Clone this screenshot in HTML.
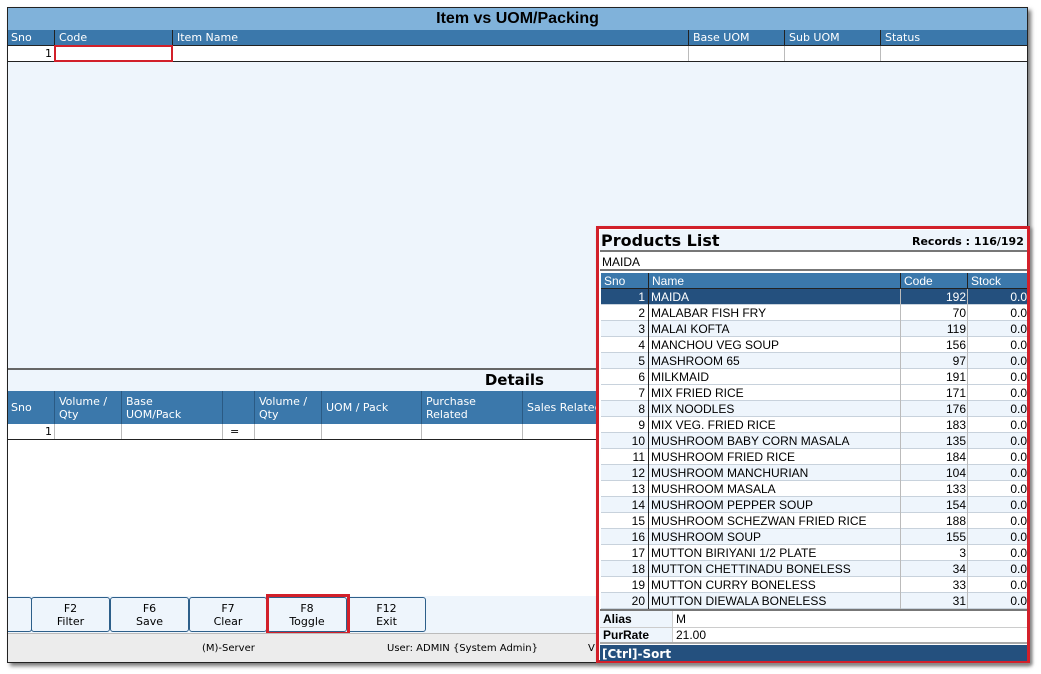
<!DOCTYPE html><html><head><style>
*{box-sizing:border-box;margin:0;padding:0}
body{width:1041px;height:674px;background:#fff;font-family:"DejaVu Sans",Verdana,sans-serif;font-size:11px;position:relative;overflow:hidden}
.a{position:absolute}
.win{left:7px;top:7px;width:1021px;height:656px;border:1px solid #222;background:#eef5fc;box-shadow:3px 3px 4px #777}
.hd{background:#3b78ab;color:#fff}
.c{position:absolute;top:0;bottom:0;border-left:1px solid #222;padding-left:4px;white-space:nowrap}
.lc{position:absolute;top:0;bottom:0;border-left:1px solid #bbb}
.btn{position:absolute;top:597px;height:35px;border:1px solid #2d5f8a;border-radius:3px;background:#eef5fc;text-align:center;font-size:11px;line-height:13px;padding-top:4px}
.pl{font-family:"Liberation Sans",Arial,sans-serif;font-size:12px}
.r{position:absolute;left:0;width:426px;height:16px;border-bottom:1px solid #c8d2dc}
.r span{position:absolute;top:1px}
</style></head><body>
<div class="a win"></div>
<div class="a" style="left:8px;top:8px;width:1019px;height:22px;background:#80b2da;text-align:center;font:bold 16px 'Liberation Sans',Arial,sans-serif;line-height:22px;color:#000">Item vs UOM/Packing</div>
<div class="a hd" style="left:8px;top:30px;width:1019px;height:15px;line-height:15px">
<span style="position:absolute;left:3px">Sno</span>
<div class="c" style="left:46px">Code</div><div class="c" style="left:164px">Item Name</div><div class="c" style="left:680px">Base UOM</div><div class="c" style="left:776px">Sub UOM</div><div class="c" style="left:872px">Status</div></div>
<div class="a" style="left:8px;top:45px;width:1019px;height:17px;background:#fff;border-top:1px solid #222;border-bottom:1px solid #222">
<span style="position:absolute;left:37px;top:1px">1</span>
<div class="lc" style="left:680px"></div><div class="lc" style="left:776px"></div><div class="lc" style="left:872px"></div></div>
<div class="a" style="left:54px;top:45px;width:119px;height:17px;border:2px solid #d2202a"></div>
<div class="a" style="left:8px;top:368px;width:1019px;height:2px;background:#666"></div>
<div class="a" style="left:8px;top:370px;width:590px;height:21px;font:bold 15px 'DejaVu Sans',sans-serif;line-height:21px;text-align:right;padding-right:54px">Details</div>
<div class="a hd" style="left:8px;top:391px;width:590px;height:33px;line-height:13px;overflow:hidden">
<span style="position:absolute;left:3px;top:10px">Sno</span>
<div class="c" style="left:46px;padding-top:4px;border-color:#2a5a84">Volume /<br>Qty</div>
<div class="c" style="left:113px;padding-top:4px;border-color:#2a5a84">Base<br>UOM/Pack</div>
<div class="c" style="left:214px;border-color:#2a5a84"></div>
<div class="c" style="left:246px;padding-top:4px;border-color:#2a5a84">Volume /<br>Qty</div>
<div class="c" style="left:313px;padding-top:10px;border-color:#2a5a84">UOM / Pack</div>
<div class="c" style="left:413px;padding-top:4px;border-color:#2a5a84">Purchase<br>Related</div>
<div class="c" style="left:514px;padding-top:10px;border-color:#2a5a84">Sales Related</div></div>
<div class="a" style="left:8px;top:424px;width:590px;height:16px;background:#fff;border-bottom:1px solid #222">
<span style="position:absolute;left:37px;top:1px">1</span><span style="position:absolute;left:222px;top:1px">=</span>
<div class="lc" style="left:46px"></div><div class="lc" style="left:113px"></div><div class="lc" style="left:214px"></div><div class="lc" style="left:246px"></div><div class="lc" style="left:313px"></div><div class="lc" style="left:413px"></div><div class="lc" style="left:514px"></div></div>
<div class="a" style="left:8px;top:440px;width:590px;height:156px;background:#fff"></div>
<div class="btn" style="left:8px;width:24px;border-left:none;border-radius:0 3px 3px 0"></div>
<div class="btn" style="left:31px;width:79px">F2<br>Filter</div>
<div class="btn" style="left:110px;width:79px">F6<br>Save</div>
<div class="btn" style="left:189px;width:78px">F7<br>Clear</div>
<div class="btn" style="left:267px;width:80px">F8<br>Toggle</div>
<div class="btn" style="left:347px;width:79px">F12<br>Exit</div>
<div class="a" style="left:266px;top:594px;width:84px;height:41px;border:3px solid #d2202a"></div>
<div class="a" style="left:8px;top:633px;width:590px;height:29px;background:#ececec;border-top:1px solid #bbb;font-size:10px;line-height:29px">
<span style="position:absolute;left:194px">(M)-Server</span><span style="position:absolute;left:379px">User: ADMIN {System Admin}</span><span style="position:absolute;left:580px">V</span></div>
<div class="a" style="left:596px;top:226px;width:434px;height:437px;border:3px solid #d2202a;background:#fff;box-shadow:2px 2px 3px #888"></div>
<div class="a" style="left:600px;top:230px;width:427px;height:22px;background:#eef5fc;border-bottom:2px solid #777;overflow:hidden">
<span style="position:absolute;left:1px;top:1px;font:bold 16px 'DejaVu Sans',sans-serif">Products List</span>
<span style="position:absolute;left:312px;top:5px;font:bold 11px 'DejaVu Sans',sans-serif;white-space:nowrap">Records : 116/192</span></div>
<div class="a pl" style="left:600px;top:254px;width:427px;height:17px;border-bottom:2px solid #777;line-height:16px;padding-left:2px">MAIDA</div>
<div class="a pl" style="left:601px;top:273px;width:426px;height:16px;background:#3b78ab;color:#fff;line-height:16px;border-bottom:1px solid #222">
<span style="position:absolute;left:3px">Sno</span><div class="c" style="left:47px;padding-left:3px">Name</div><div class="c" style="left:299px;padding-left:3px">Code</div><div class="c" style="left:366px;padding-left:3px">Stock</div></div>
<div class="a pl" style="left:601px;top:289px;width:426px;height:320px;overflow:hidden">
<div class="r" style="top:0;background:#24507e;color:#fff"><span style="right:382px">1</span><span style="left:50px">MAIDA</span><span style="right:61px">192</span><span style="right:0">0.0</span></div>
<div class="r" style="top:16px;background:#fff"><span style="right:382px">2</span><span style="left:50px">MALABAR FISH FRY</span><span style="right:61px">70</span><span style="right:0">0.0</span></div>
<div class="r" style="top:32px;background:#eef5fc"><span style="right:382px">3</span><span style="left:50px">MALAI KOFTA</span><span style="right:61px">119</span><span style="right:0">0.0</span></div>
<div class="r" style="top:48px;background:#fff"><span style="right:382px">4</span><span style="left:50px">MANCHOU VEG SOUP</span><span style="right:61px">156</span><span style="right:0">0.0</span></div>
<div class="r" style="top:64px;background:#eef5fc"><span style="right:382px">5</span><span style="left:50px">MASHROOM 65</span><span style="right:61px">97</span><span style="right:0">0.0</span></div>
<div class="r" style="top:80px;background:#fff"><span style="right:382px">6</span><span style="left:50px">MILKMAID</span><span style="right:61px">191</span><span style="right:0">0.0</span></div>
<div class="r" style="top:96px;background:#fff"><span style="right:382px">7</span><span style="left:50px">MIX FRIED RICE</span><span style="right:61px">171</span><span style="right:0">0.0</span></div>
<div class="r" style="top:112px;background:#eef5fc"><span style="right:382px">8</span><span style="left:50px">MIX NOODLES</span><span style="right:61px">176</span><span style="right:0">0.0</span></div>
<div class="r" style="top:128px;background:#fff"><span style="right:382px">9</span><span style="left:50px">MIX VEG. FRIED RICE</span><span style="right:61px">183</span><span style="right:0">0.0</span></div>
<div class="r" style="top:144px;background:#eef5fc"><span style="right:382px">10</span><span style="left:50px">MUSHROOM BABY CORN MASALA</span><span style="right:61px">135</span><span style="right:0">0.0</span></div>
<div class="r" style="top:160px;background:#fff"><span style="right:382px">11</span><span style="left:50px">MUSHROOM FRIED RICE</span><span style="right:61px">184</span><span style="right:0">0.0</span></div>
<div class="r" style="top:176px;background:#eef5fc"><span style="right:382px">12</span><span style="left:50px">MUSHROOM MANCHURIAN</span><span style="right:61px">104</span><span style="right:0">0.0</span></div>
<div class="r" style="top:192px;background:#fff"><span style="right:382px">13</span><span style="left:50px">MUSHROOM MASALA</span><span style="right:61px">133</span><span style="right:0">0.0</span></div>
<div class="r" style="top:208px;background:#eef5fc"><span style="right:382px">14</span><span style="left:50px">MUSHROOM PEPPER SOUP</span><span style="right:61px">154</span><span style="right:0">0.0</span></div>
<div class="r" style="top:224px;background:#fff"><span style="right:382px">15</span><span style="left:50px">MUSHROOM SCHEZWAN FRIED RICE</span><span style="right:61px">188</span><span style="right:0">0.0</span></div>
<div class="r" style="top:240px;background:#eef5fc"><span style="right:382px">16</span><span style="left:50px">MUSHROOM SOUP</span><span style="right:61px">155</span><span style="right:0">0.0</span></div>
<div class="r" style="top:256px;background:#fff"><span style="right:382px">17</span><span style="left:50px">MUTTON BIRIYANI 1/2 PLATE</span><span style="right:61px">3</span><span style="right:0">0.0</span></div>
<div class="r" style="top:272px;background:#eef5fc"><span style="right:382px">18</span><span style="left:50px">MUTTON CHETTINADU BONELESS</span><span style="right:61px">34</span><span style="right:0">0.0</span></div>
<div class="r" style="top:288px;background:#fff"><span style="right:382px">19</span><span style="left:50px">MUTTON CURRY BONELESS</span><span style="right:61px">33</span><span style="right:0">0.0</span></div>
<div class="r" style="top:304px;background:#eef5fc"><span style="right:382px">20</span><span style="left:50px">MUTTON DIEWALA BONELESS</span><span style="right:61px">31</span><span style="right:0">0.0</span></div>
<div class="lc" style="left:47px;border-color:#222"></div><div class="lc" style="left:299px"></div><div class="lc" style="left:366px"></div>
</div>
<div class="a pl" style="left:600px;top:609px;width:427px;height:35px;border-top:2px solid #777;border-bottom:2px solid #aaa;background:#fff;line-height:16px">
<div style="position:absolute;left:0;top:0;width:73px;height:31px;background:#eef5fc;border-right:1px solid #ccc;font-weight:bold;padding-left:3px">Alias<br>PurRate</div>
<span style="position:absolute;left:76px;top:0">M</span><span style="position:absolute;left:76px;top:16px">21.00</span>
<div style="position:absolute;left:0;top:16px;width:427px;border-top:1px solid #ccc"></div></div>
<div class="a" style="left:600px;top:645px;width:427px;height:16px;background:#24507e;color:#fff;font:bold 12px 'DejaVu Sans',sans-serif;line-height:18px;padding-left:2px">[Ctrl]-Sort</div>
</body></html>
